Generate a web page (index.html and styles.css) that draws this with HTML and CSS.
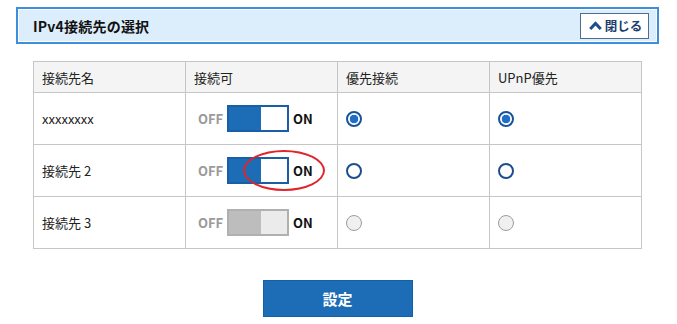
FILE: index.html
```html
<!DOCTYPE html>
<html lang="ja">
<head>
<meta charset="utf-8">
<link rel="stylesheet" href="styles.css">
</head>
<body>
<div class="panel">
  <h2 class="panel-title">IPv4接続先の選択</h2>
  <button class="close-btn" type="button">
    <svg class="chev" width="13" height="9" viewBox="0 0 13 9"><path d="M1.2 8 L6.5 2.4 L11.8 8" fill="none" stroke="#1b4f8e" stroke-width="3"/></svg>
    <span>閉じる</span>
  </button>
</div>

<div class="content">
  <table class="conn">
    <thead>
      <tr><th>接続先名</th><th>接続可</th><th>優先接続</th><th>UPnP優先</th></tr>
    </thead>
    <tbody>
      <tr>
        <td>xxxxxxxx</td>
        <td><div class="sw"><span class="off">OFF</span><span class="toggle"><span class="knob"></span></span><span class="on">ON</span></div></td>
        <td><span class="radio checked"></span></td>
        <td><span class="radio checked"></span></td>
      </tr>
      <tr>
        <td>接続先 2</td>
        <td class="mark-cell"><div class="sw"><span class="off">OFF</span><span class="toggle"><span class="knob"></span></span><span class="on">ON</span></div><span class="ellipse"></span></td>
        <td><span class="radio"></span></td>
        <td><span class="radio"></span></td>
      </tr>
      <tr>
        <td>接続先 3</td>
        <td><div class="sw"><span class="off">OFF</span><span class="toggle disabled"><span class="knob"></span></span><span class="on">ON</span></div></td>
        <td><span class="radio disabled"></span></td>
        <td><span class="radio disabled"></span></td>
      </tr>
    </tbody>
  </table>
  <div class="actions">
    <button class="submit" type="button">設定</button>
  </div>
</div>
</body>
</html>
```

FILE: styles.css
```css
* { box-sizing: border-box; }
body {
  margin: 0;
  background: #fff;
  font-family: "Noto Sans CJK JP", "Noto Sans", "Liberation Sans", sans-serif;
  color: #222;
}
.panel {
  margin: 7px 18px 0 16px;
  height: 37px;
  border: 2px solid #3d8fdc;
  box-shadow: inset 0 0 0 1px #fff;
  background: #dcedfb;
  display: flex;
  align-items: center;
  justify-content: space-between;
  padding: 0 8px 0 15px;
}
.panel-title {
  margin: 0;
  font-size: 14px;
  font-weight: 700;
  color: #111;
  letter-spacing: 0.2px;
}
.close-btn {
  width: 69px;
  height: 26px;
  background: #fff;
  border: 1px solid #4a6f96;
  display: flex;
  align-items: center;
  justify-content: center;
  gap: 3px;
  padding: 0 0 0 2px;
  font-family: inherit;
  font-size: 12.5px;
  font-weight: 700;
  color: #1b3e6e;
}
.chev { display: block; }
.content {
  width: 609px;
  margin: 17px 0 0 33px;
}
.conn {
  width: 609px;
  border-collapse: collapse;
  table-layout: fixed;
  font-size: 13px;
}
.conn th, .conn td {
  border: 1px solid #c6c6c6;
  text-align: left;
  padding: 0 0 0 8px;
  font-weight: 400;
}
.conn th {
  background: #f4f4f4;
  height: 31px;
  color: #222;
}
.conn td { height: 52px; }
.sw {
  display: flex;
  align-items: center;
  padding-left: 4px;
  font-size: 13px;
  font-weight: 700;
}
.off { color: #9a9a9a; width: 29px; }
.on { color: #111; margin-left: 4px; }
.toggle {
  width: 62px;
  height: 27px;
  background: #1c6cb6;
  border: 2px solid #1a5ea6;
  display: flex;
  justify-content: flex-end;
}
.knob {
  width: 26px;
  height: 100%;
  background: #fff;
}
.toggle.disabled {
  background: #bdbdbd;
  border-color: #b0b0b0;
}
.toggle.disabled .knob { background: #ebebeb; }
.radio {
  display: block;
  width: 16px;
  height: 16px;
  border-radius: 50%;
  border: 2px solid #1c4d8e;
  background: #fff;
}
.radio.checked {
  background: radial-gradient(circle, #1f6fc4 0 4px, #fff 4.6px);
  border-color: #17539c;
}
.radio.disabled {
  border: 1.5px solid #9c9c9c;
  background: #f0f0f0;
}
.mark-cell { position: relative; }
.ellipse {
  position: absolute;
  left: 57px;
  top: 5px;
  width: 82px;
  height: 41px;
  border: 2px solid #e0252b;
  border-radius: 50%;
}
.actions {
  display: flex;
  justify-content: center;
  margin-top: 31px;
}
.submit {
  width: 150px;
  height: 37px;
  background: #1c6db6;
  border: 1px solid #1660a6;
  color: #fff;
  font-family: inherit;
  font-size: 15px;
  font-weight: 700;
}
```
